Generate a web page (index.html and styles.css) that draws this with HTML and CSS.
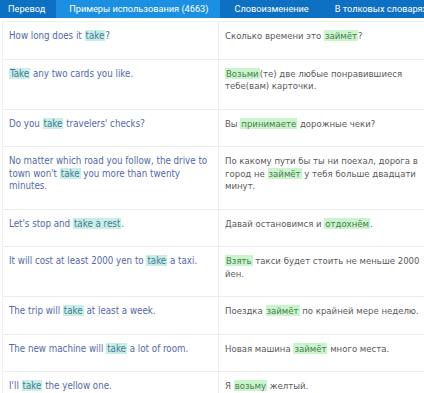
FILE: index.html
```html
<!DOCTYPE html>
<html lang="ru">
<head>
<meta charset="utf-8">
<link rel="stylesheet" href="styles.css">
</head>
<body>
<nav class="tabs">
  <span class="tab tab-first">Перевод</span>
  <span class="tab tab-active">Примеры использования (4663)</span>
  <span class="tab tab-third">Словоизменение</span>
  <span class="tab">В толковых словарях</span>
</nav>
<div class="examples">
  <div class="row">
    <div class="src">How long does it <span class="hl">take</span>?</div>
    <div class="dst">Сколько времени это <span class="hl">займёт</span>?</div>
  </div>
  <div class="row">
    <div class="src"><span class="hl">Take</span> any two cards you like.</div>
    <div class="dst"><span class="hl">Возьми</span>(те) две любые понравившиеся тебе(вам) карточки.</div>
  </div>
  <div class="row">
    <div class="src">Do you <span class="hl">take</span> travelers' checks?</div>
    <div class="dst">Вы <span class="hl">принимаете</span> дорожные чеки?</div>
  </div>
  <div class="row">
    <div class="src">No matter which road you follow, the drive to town won't <span class="hl">take</span> you more than twenty minutes.</div>
    <div class="dst">По какому пути бы ты ни поехал, дорога в город не <span class="hl">займёт</span> у тебя больше двадцати минут.</div>
  </div>
  <div class="row">
    <div class="src">Let's stop and <span class="hl">take a rest</span>.</div>
    <div class="dst">Давай остановимся и <span class="hl">отдохнём</span>.</div>
  </div>
  <div class="row">
    <div class="src">It will cost at least 2000 yen to <span class="hl">take</span> a taxi.</div>
    <div class="dst"><span class="hl">Взять</span> такси будет стоить не меньше 2000 йен.</div>
  </div>
  <div class="row">
    <div class="src">The trip will <span class="hl">take</span> at least a week.</div>
    <div class="dst">Поездка <span class="hl">займёт</span> по крайней мере неделю.</div>
  </div>
  <div class="row">
    <div class="src">The new machine will <span class="hl">take</span> a lot of room.</div>
    <div class="dst">Новая машина <span class="hl">займёт</span> много места.</div>
  </div>
  <div class="row">
    <div class="src">I'll <span class="hl">take</span> the yellow one.</div>
    <div class="dst">Я <span class="hl">возьму</span> желтый.</div>
  </div>
</div>
</body>
</html>
```

FILE: styles.css
```css
html, body {
  margin: 0;
  padding: 0;
  background: #ffffff;
}
body {
  width: 424px;
  height: 393px;
  overflow: hidden;
}
.tabs {
  display: flex;
  height: 18px;
  background: #0d70c3;
  white-space: nowrap;
  overflow: hidden;
}
.tab {
  display: flex;
  align-items: center;
  padding: 0 12px 0 13px;
  color: #ffffff;
  font-family: Roboto, "Open Sans", sans-serif;
  font-size: 9.2px;
  line-height: 18px;
}
.tab-first {
  padding: 0 11px 0 8px;
}
.tab-active {
  background: #1b8fe2;
}
.tab-third {
  padding: 0 13px 0 14px;
}
.examples {
  margin-top: 3px;
  border-top: 1px solid #f0f0f0;
  border-left: 1px solid #f0f0f0;
  margin-left: 2px;
  font-family: "DejaVu Sans Condensed", "DejaVu Sans", sans-serif;
  font-stretch: condensed;
  font-size: 9.7px;
  line-height: 12.5px;
}
.row {
  display: grid;
  grid-template-columns: 216px 1fr;
  border-bottom: 1px solid #ececec;
}
.src, .dst {
  padding: 8px 3px 16px 6px;
}
.src {
  color: #5268aa;
  border-right: 1px solid #ececec;
}
.dst {
  color: #5a5a5a;
  font-size: 9.5px;
  padding-left: 6px;
  padding-right: 1px;
}
.hl {
  padding: 0 1px;
}
.src .hl {
  background: #c8efe3;
  color: #46799c;
}
.dst .hl {
  background: #c9f5cd;
  color: #4e7b4e;
}
```
